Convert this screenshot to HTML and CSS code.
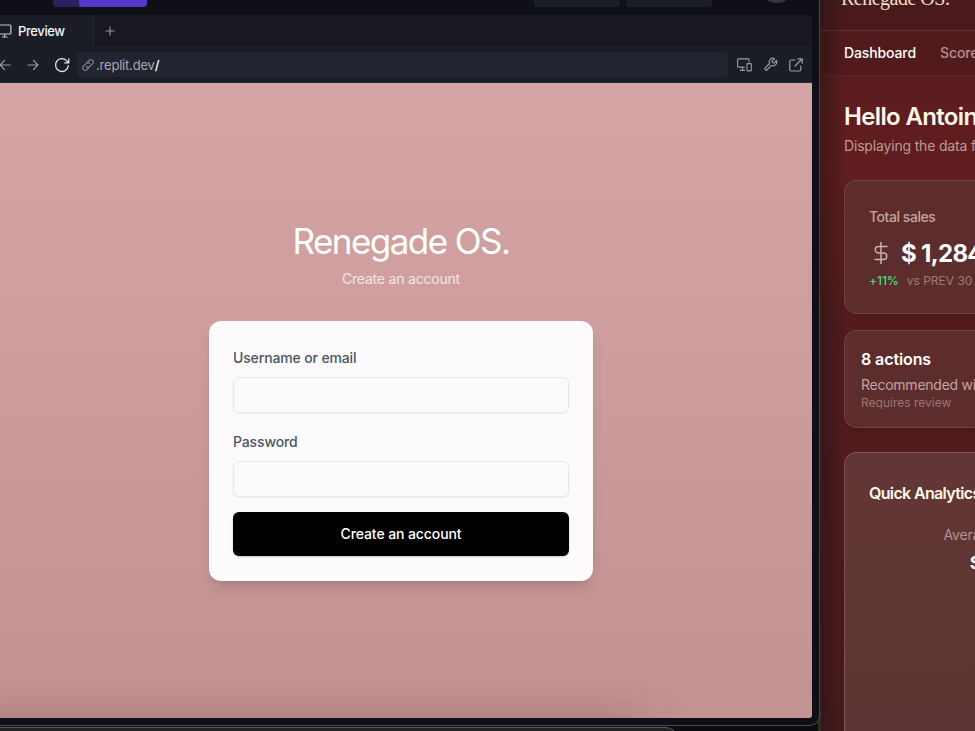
FILE: index.html
```html
<!DOCTYPE html>
<html lang="en">
<head>
<meta charset="utf-8">
<title>Renegade OS</title>
<link rel="stylesheet" href="styles.css">
</head>
<body>
<main class="desktop">
  <section class="dash">
    <header class="dash-head"><span class="brand">Renegade OS.</span></header>
    <nav class="dash-nav"><span class="current">Dashboard</span><span>Scores</span></nav>
    <div class="dash-body">
      <h1>Hello Antoine</h1>
      <p class="lead">Displaying the data for</p>
      <article class="card sales">
        <p class="sales-label">Total sales</p>
        <div class="sales-value">
          <svg width="24" height="24" viewBox="0 0 24 24" fill="none" stroke="currentColor" stroke-width="1.5" stroke-linecap="round" stroke-linejoin="round"><path d="M12 1.5v21M18 5.5H9.5a3.25 3.25 0 0 0 0 6.5h5a3.25 3.25 0 0 1 0 6.5H6"/></svg>
          <strong>$&nbsp;1,284</strong>
        </div>
        <p class="sales-note"><span class="up">+11%</span><span>vs PREV 30</span></p>
      </article>
      <article class="card actions">
        <h2>8 actions</h2>
        <p class="rec">Recommended with</p>
        <p class="req">Requires review</p>
      </article>
      <article class="card analytics">
        <h2>Quick Analytics</h2>
        <div class="stat"><span>Average</span><strong>$</strong></div>
      </article>
    </div>
  </section>

  <div class="strip"></div>
  <div class="back-window"></div>

  <section class="window">
    <div class="topbar">
      <div class="run"><i></i><b></b></div>
      <div class="pills"><i></i><i></i></div>
      <div class="avatar"></div>
    </div>
    <div class="pane">
      <div class="tabs">
        <div class="tab">
          <svg width="14" height="14" viewBox="0 0 14 14" fill="none" stroke="currentColor" stroke-width="1.2"><rect x=".6" y="1" width="12.3" height="9" rx="1"/><path d="M6.7 10v3M4 13h5.6"/></svg>
          <span>Preview</span>
        </div>
        <div class="add"><svg width="10" height="10" viewBox="0 0 10 10" stroke="currentColor" stroke-width="1.1"><path d="M5 .5v9M.5 5h9"/></svg></div>
      </div>
      <div class="toolbar">
        <div class="history">
          <svg width="12" height="12" viewBox="0 0 12 12" fill="none" stroke="currentColor" stroke-width="1.1" stroke-linecap="round"><path d="M11 6H1M5.5 1.5L1 6l4.5 4.5"/></svg>
          <svg width="12" height="12" viewBox="0 0 12 12" fill="none" stroke="currentColor" stroke-width="1.1" stroke-linecap="round"><path d="M1 6h10M6.5 1.5L11 6l-4.5 4.5"/></svg>
          <svg class="reload" width="16" height="16" viewBox="0 0 16 16" fill="none" stroke="currentColor" stroke-width="1.25" stroke-linecap="round" stroke-linejoin="round"><path d="M14.3 8.6A6.4 6.4 0 1 1 12.5 3.6L14.6 5.7M14.8 1.8v4.1h-4.1"/></svg>
        </div>
        <div class="address">
          <svg width="12" height="12" viewBox="0 0 12 12" fill="none" stroke="currentColor" stroke-width="1" stroke-linecap="round"><path d="M5 4.1L7 2.1a2.05 2.05 0 0 1 2.9 2.9L7.5 7.4a2.05 2.05 0 0 1-2.9 0M7 7.9L5 9.9A2.05 2.05 0 0 1 2.1 7l2.4-2.4a2.05 2.05 0 0 1 2.9 0"/></svg>
          <span>.replit.dev<b>/</b></span>
        </div>
        <div class="tools">
          <svg width="15" height="14" viewBox="0 0 15 14" fill="none" stroke="currentColor" stroke-width="1.1"><path d="M12 4V1.6a.7.7 0 0 0-.7-.7H1.3a.7.7 0 0 0-.7.7v6.8c0 .4.3.7.7.7H7.8M5.5 9v3M3 12.4h5"/><rect x="10" y="5.6" width="4.3" height="7.3" rx=".6"/></svg>
          <svg width="15" height="15" viewBox="0 0 24 24" fill="none" stroke="currentColor" stroke-width="1.9" stroke-linecap="round" stroke-linejoin="round"><path d="M14.7 6.3a1 1 0 0 0 0 1.4l1.6 1.6a1 1 0 0 0 1.4 0l3.77-3.77a6 6 0 0 1-7.94 7.94l-6.91 6.91a2.12 2.12 0 0 1-3-3l6.91-6.91a6 6 0 0 1 7.94-7.94z"/></svg>
          <svg width="14" height="14" viewBox="0 0 14 14" fill="none" stroke="currentColor" stroke-width="1.2" stroke-linecap="round" stroke-linejoin="round"><path d="M6 2H2a1.2 1.2 0 0 0-1.2 1.2v8.6A1.2 1.2 0 0 0 2 13h8.6a1.2 1.2 0 0 0 1.2-1.2V8M8.8.8h4.4v4.4M13 1L6 8"/></svg>
        </div>
      </div>
      <div class="preview">
        <h1 class="title">Renegade OS.</h1>
        <p class="subtitle">Create an account</p>
        <form class="signup">
          <label for="user">Username or email</label>
          <input id="user" type="text">
          <label for="pass">Password</label>
          <input id="pass" type="password">
          <button type="button">Create an account</button>
        </form>
      </div>
    </div>
  </section>
</main>
</body>
</html>
```
FILE: styles.css
```css
* { box-sizing: border-box; margin: 0; padding: 0; }
body { width: 975px; height: 731px; overflow: hidden; background: #0b0c0e; font-family: Inter, "Liberation Sans", sans-serif; }
svg { display: block; flex: none; }
.desktop { position: relative; width: 975px; height: 731px; overflow: hidden; }

.dash { position: absolute; left: 820px; top: 0; width: 155px; height: 731px; overflow: hidden; white-space: nowrap; background: linear-gradient(180deg, #4a191b 0, #5d1d20 90px, #611d20 170px, #541b1e 320px, #4c1a1d 731px); }
.dash::after { content: ""; position: absolute; inset: 0 auto 0 0; width: 26px; background: linear-gradient(90deg, rgba(20, 16, 14, .42), rgba(20, 16, 14, 0)); }
.dash-head { display: flex; height: 31px; padding-left: 21px; border-bottom: 1px solid #673133; background: #4a191b; }
.brand { margin-top: -14px; font: 20px/24px "Liberation Serif", serif; letter-spacing: -.5px; color: #f1dfce; }
.dash-nav { display: flex; gap: 24px; height: 45px; padding-left: 24px; line-height: 44px; font-size: 14px; font-weight: 500; letter-spacing: -.08px; color: #b19091; border-bottom: 1px solid #642528; background: #531a1d; }
.dash-nav .current { color: #fff; font-weight: 550; letter-spacing: -.12px; }
.dash-body { padding: 25px 0 0 24px; }
.dash-body h1 { font-size: 24px; line-height: 32px; font-weight: 600; letter-spacing: -.65px; color: #fef8e9; }
.lead { margin-top: 3px; font-size: 14px; line-height: 20px; letter-spacing: -.17px; color: #bc9b92; }
.card { width: 320px; border: 1px solid #764343; border-radius: 12px; background: #5d2c2c; box-shadow: 0 1px 3px rgba(0, 0, 0, .2); }
.sales { height: 134px; margin-top: 24px; padding: 26px 24px; }
.sales-label { font-size: 14px; font-weight: 500; line-height: 20px; letter-spacing: -.45px; color: #c6a69d; }
.sales-value { display: flex; align-items: center; gap: 8px; height: 32px; margin-top: 10px; color: #c8b3b1; }
.sales-value strong { font-size: 24px; font-weight: 700; letter-spacing: -.7px; color: #fff; }
.sales-note { display: flex; gap: 8px; margin-top: 4px; font-size: 12px; line-height: 16px; color: #a07c79; }
.up { color: #4ade80; letter-spacing: -.05px; font-weight: 500; }
.actions { height: 98px; margin-top: 16px; padding: 16px; }
.actions h2 { font-size: 16px; line-height: 24px; font-weight: 600; letter-spacing: -.1px; color: #fff; }
.rec { margin-top: 4px; font-size: 14px; line-height: 20px; letter-spacing: -.25px; color: #c0a5a3; }
.req { font-size: 12px; line-height: 16px; color: #9b7776; }
.analytics { height: 340px; margin-top: 24px; padding: 28px 24px; background: linear-gradient(180deg, #623636, #5f3634 50%, #5b3433); border-color: #805657; }
.analytics h2 { font-size: 16px; line-height: 24px; font-weight: 600; letter-spacing: -.65px; color: #fef8e9; }
.stat { display: flex; flex-direction: column; align-items: center; width: 202px; margin-top: 20px; color: #b2938f; font-size: 14px; line-height: 20px; letter-spacing: -.2px; }
.stat strong { margin-left: 11px; font-size: 18px; line-height: 36px; color: #fef8e9; }

.strip { position: absolute; left: 812px; top: 712px; width: 9px; height: 19px; background: linear-gradient(90deg, #090a0b 6px, #28301f 6px, #332e23); }
.back-window { position: absolute; left: -12px; top: 727px; width: 690px; height: 40px; border: 1px solid #58585a; border-radius: 12px; background: #242324; }

.window { position: absolute; left: -12px; top: -12px; width: 832px; height: 738px; padding: 12px 7px 7px 12px; border: 1px solid #46484c; border-width: 0 1px 1px 0; border-radius: 10px; background: #0f1017; overflow: hidden; }
.topbar { display: flex; height: 15px; padding-left: 53px; align-items: flex-start; }
.run { display: flex; width: 94px; height: 7px; border-radius: 0 0 4px 4px; background: #2d205f; overflow: hidden; }
.run i { width: 26px; }
.run b { width: 68px; border-radius: 0 0 0 4px; background: #5438cc; }
.pills { display: flex; gap: 6px; margin-left: 387px; }
.pills i { width: 86px; height: 7px; border-radius: 0 0 4px 4px; background: #1b1e27; }
.avatar { width: 18px; height: 3px; margin-left: 56px; border-radius: 0 0 50% 50% / 0 0 100% 100%; background: #363542; }
.pane { display: flex; flex-direction: column; width: 812px; height: 703px; border-radius: 0 4px 3px 0; background: #1a1d26; overflow: hidden; }
.tabs { display: flex; height: 32px; background: #181820; border-bottom: 1px solid #1e2029; }
.tab { display: flex; align-items: center; gap: 6px; width: 96px; height: 32px; margin-left: -2px; border-right: 1px solid #22242d; background: #1a1d26; color: #c6c7cc; font-size: 13px; }
.tab span { color: #f3f4f6; letter-spacing: -.4px; font-weight: 500; }
.add { display: grid; place-items: center; width: 32px; height: 31px; color: #989aa2; }
.toolbar { display: flex; align-items: center; height: 36px; border-bottom: 1px solid #282d34; color: #9b9da5; }
.history { display: flex; align-items: center; gap: 16px; width: 78px; margin-left: -1px; }
.history .reload { margin-left: -1px; color: #e4e5e9; }
.address { display: flex; align-items: center; gap: 1px; width: 651px; height: 25px; padding-left: 4px; border-radius: 4px; background: #222530; font-size: 13px; letter-spacing: -.2px; }
.address span { color: #a6a8b0; }
.address svg { width: 14px; height: 14px; color: #858891; }
.address b { font-weight: 500; color: #fff; }
.tools { display: flex; align-items: center; gap: 11px; margin-left: 9px; }

.preview { position: relative; display: flex; flex-direction: column; align-items: center; height: 635px; padding: 138px 10px 0 0; background: linear-gradient(180deg, #d5a5a5, #c39292); }
.preview::after { content: ""; position: absolute; left: -30px; bottom: -38px; width: 670px; height: 30px; box-shadow: 0 0 50px rgba(60, 40, 40, .36); }
.title { height: 40px; font-size: 35px; line-height: 40px; font-weight: 400; letter-spacing: -1.55px; color: #fff; white-space: nowrap; }
.subtitle { margin-top: 8px; font-size: 14px; line-height: 20px; letter-spacing: -.2px; color: #f4e6e7; }
.signup { width: 384px; height: 260px; margin-top: 31.5px; padding: 27px 24px; border-radius: 12px; background: #fcfafb; box-shadow: 0 10px 15px -3px rgba(0, 0, 0, .12), 0 4px 6px -4px rgba(0, 0, 0, .12); }
.signup label { display: block; font-size: 14px; font-weight: 500; line-height: 20px; letter-spacing: -.14px; color: #4b5563; }
.signup input { display: block; width: 336px; height: 36px; margin: 9px 0 19px; border: 1px solid #e5e7eb; border-radius: 6px; background: transparent; box-shadow: 0 1px 2px rgba(0, 0, 0, .06); }
.signup button { display: block; width: 336px; height: 44px; margin-top: -3.5px; border: 0; border-radius: 6px; background: #000; color: #fff; font: 500 14px/20px Inter, sans-serif; letter-spacing: -.1px; box-shadow: 0 1px 2px rgba(0, 0, 0, .2); }
```
